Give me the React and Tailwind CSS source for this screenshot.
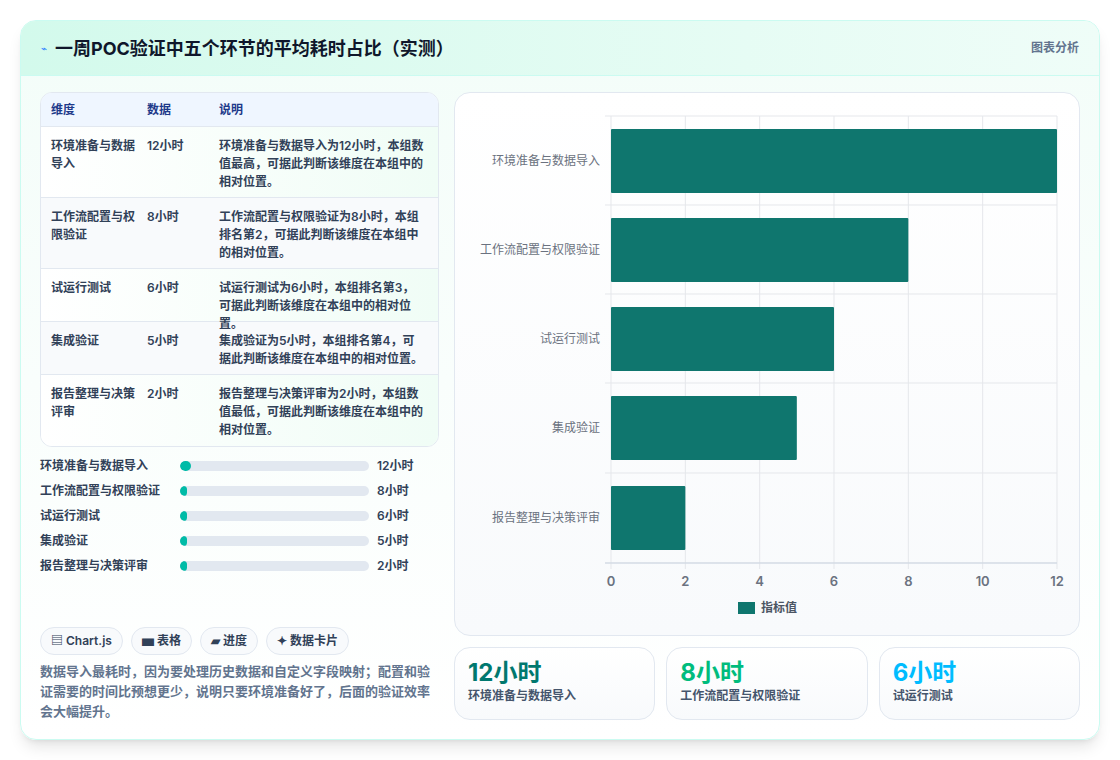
const rows = [
  { name: "环境准备与数据导入", v: 12, desc: "环境准备与数据导入为12小时，本组数值最高，可据此判断该维度在本组中的相对位置。", h: "h-[71px]" },
  { name: "工作流配置与权限验证", v: 8, desc: "工作流配置与权限验证为8小时，本组排名第2，可据此判断该维度在本组中的相对位置。", h: "h-[71px]" },
  { name: "试运行测试", v: 6, desc: "试运行测试为6小时，本组排名第3，可据此判断该维度在本组中的相对位置。", h: "h-[53px]" },
  { name: "集成验证", v: 5, desc: "集成验证为5小时，本组排名第4，可据此判断该维度在本组中的相对位置。", h: "h-[53px]" },
  { name: "报告整理与决策评审", v: 2, desc: "报告整理与决策评审为2小时，本组数值最低，可据此判断该维度在本组中的相对位置。", h: "h-[71px]" },
];

function Chart() {
  const x0 = 156, unit = 446 / 12;
  const rowsY = [23, 112, 201, 290, 380, 470];
  return (
    <svg width="626" height="544" className="block">
      {[0, 2, 4, 6, 8, 10, 12].map((t) => (
        <g key={t}>
          <line x1={x0 + t * unit} x2={x0 + t * unit} y1={23} y2={476} stroke="#e5e7eb" />
          <text x={x0 + t * unit} y={493} textAnchor="middle" fontSize="13" fontWeight="600" fill="#6b7280">{t}</text>
        </g>
      ))}
      {rowsY.map((y) => (
        <line key={y} x1={x0 - 6} x2={x0 + 446} y1={y} y2={y} stroke="#e5e7eb" />
      ))}
      <line x1={x0 - 6} x2={x0 + 446} y1={470} y2={470} stroke="#cbd5e1" />
      {rows.map((r, i) => (
        <g key={r.name}>
          <rect x={x0} y={rowsY[i] + 13} width={r.v * unit} height={64} fill="#0f766e" rx="1" />
          <text x={145} y={rowsY[i] + 49} textAnchor="end" fontSize="12" fill="#6b7280">{r.name}</text>
        </g>
      ))}
      <rect x={283} y={509} width={17} height={12} fill="#0f766e" />
      <text x={306} y={519} fontSize="12" fontWeight="600" fill="#4b5563">指标值</text>
    </svg>
  );
}

export default function App() {
  return (
    <div className="w-[1120px] h-[760px] bg-white p-5" style={{ fontFamily: "Inter, 'Noto Sans CJK SC', sans-serif" }}>
      <div className="h-[720px] rounded-2xl border border-teal-100 bg-gradient-to-b from-[#f3fdf9] to-white shadow-lg overflow-hidden flex flex-col">
        <div className="h-[55px] shrink-0 flex items-center justify-between px-5 bg-gradient-to-r from-[#d3faec] to-[#effdf8] border-b border-teal-100">
          <div className="flex items-center gap-2">
            <span className="text-[10px] text-blue-500">⌁</span>
            <h1 className="text-[18px] font-bold text-slate-900">一周POC验证中五个环节的平均耗时占比（实测）</h1>
          </div>
          <span className="text-xs font-semibold text-slate-500">图表分析</span>
        </div>
        <div className="flex gap-[15px] px-[19px] pt-4">
          <div className="w-[401px] flex flex-col">
            <div className="rounded-xl border border-slate-200 overflow-hidden bg-white text-xs">
              <div className="h-[34px] flex items-center bg-[#eff6ff] font-semibold text-[#1e3a8a] border-b border-slate-200">
                <div className="w-[106px] pl-[10px]">维度</div>
                <div className="w-[72px]">数据</div>
                <div>说明</div>
              </div>
              {rows.map((r, i) => (
                <div key={r.name} className={`${r.h} flex items-start pt-[10px] font-semibold text-slate-700 leading-[18px] ${i < 4 ? "border-b border-slate-200" : ""} ${i % 2 ? "bg-[#f8fafc]" : "bg-gradient-to-r from-white to-[#f0fdf6]"}`}>
                  <div className="w-[106px] pl-[10px] pr-3">{r.name}</div>
                  <div className="w-[72px]">{r.v}小时</div>
                  <div className="flex-1 pr-3">{r.desc}</div>
                </div>
              ))}
            </div>
            <div className="mt-[9px] flex flex-col gap-[6px]">
              {rows.map((r) => (
                <div key={r.name} className="h-[19px] flex items-center text-xs font-semibold text-slate-700">
                  <div className="w-[140px]">{r.name}</div>
                  <div className="w-[189px] h-[10px] rounded-full bg-slate-200 overflow-hidden">
                    <div className="h-full rounded-full bg-teal-500" style={{ width: r.v === 12 ? 11 : 7 }} />
                  </div>
                  <div className="ml-2">{r.v}小时</div>
                </div>
              ))}
            </div>
            <div className="mt-[52px] flex gap-2 text-xs font-semibold text-slate-700">
              {["▤ Chart.js", "▅ 表格", "▰ 进度", "✦ 数据卡片"].map((c) => (
                <span key={c} className="h-[28px] px-[10px] flex items-center rounded-full border border-slate-200 bg-slate-50">{c}</span>
              ))}
            </div>
            <p className="mt-[6px] text-[13px] leading-[20px] font-semibold text-slate-500">
              数据导入最耗时，因为要处理历史数据和自定义字段映射；配置和验证需要的时间比预想更少，说明只要环境准备好了，后面的验证效率会大幅提升。
            </p>
          </div>
          <div className="w-[626px] flex flex-col gap-[11px]">
            <div className="h-[544px] rounded-2xl border border-slate-200 bg-gradient-to-b from-white to-[#f8fafc] overflow-hidden">
              <Chart />
            </div>
            <div className="grid grid-cols-3 gap-[11px]">
              {[["12小时", "环境准备与数据导入", "text-teal-700"], ["8小时", "工作流配置与权限验证", "text-emerald-500"], ["6小时", "试运行测试", "text-sky-400"]].map(([v, l, c]) => (
                <div key={l} className="h-[73px] rounded-2xl border border-slate-200 bg-gradient-to-b from-white to-[#f8fafc] px-[13px] pt-[10px]">
                  <div className={`text-[24px] leading-[30px] font-bold ${c}`}>{v}</div>
                  <div className="text-xs font-semibold text-slate-600">{l}</div>
                </div>
              ))}
            </div>
          </div>
        </div>
      </div>
    </div>
  );
}
